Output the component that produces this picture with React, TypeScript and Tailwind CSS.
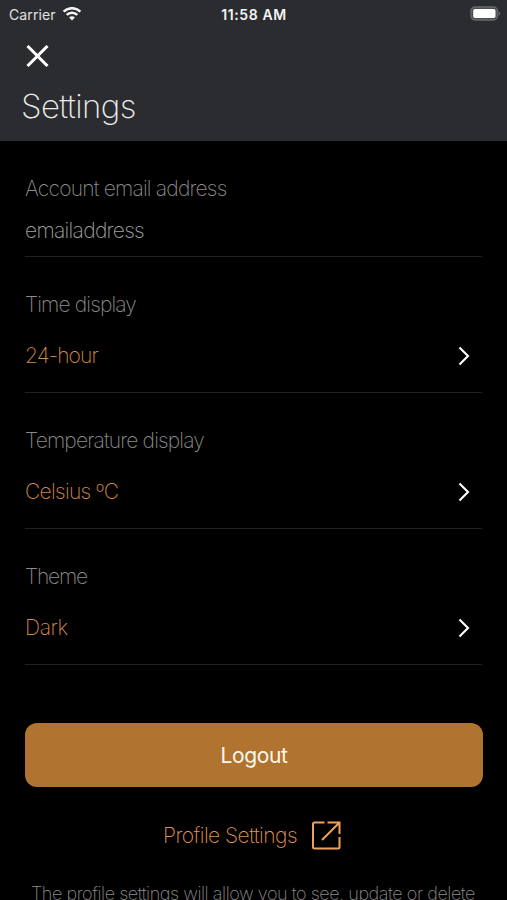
import React from "react";

function Wifi() {
  return (
    <svg width="20" height="15" viewBox="0 0 20 15" fill="none" stroke="#f4f4f4" strokeWidth="2.5">
      <path d="M1.6 4.6a12 12 0 0 1 16.8 0" />
      <path d="M4.7 7.8a7.6 7.6 0 0 1 10.6 0" />
      <path d="M10 13.6l-2.9-3a4 4 0 0 1 5.8 0z" fill="#f4f4f4" stroke="none" />
    </svg>
  );
}

function Battery() {
  return (
    <svg width="31" height="16" viewBox="0 0 31 16">
      <rect x="1" y="1" width="26.5" height="13" rx="4" fill="#4b4c4f" stroke="#68696c" strokeWidth="1.3" />
      <rect x="3.2" y="3" width="22.3" height="9" rx="1.8" fill="#fff" />
      <path d="M28.6 5.2c2 .8 2 3.8 0 4.6z" fill="#68696c" />
    </svg>
  );
}

function SettingRow({ label, value, labelClass, valueClass }: { label: string; value: string; labelClass: string; valueClass: string }) {
  return (
    <section className="h-[136px] border-b border-[#212121] pt-[34px]">
      <div className={`h-7 leading-7 whitespace-nowrap text-[#8c8c8c] ${labelClass}`}>{label}</div>
      <div className="mt-[23px] flex h-7 items-center justify-between pr-3">
        <span className={`leading-7 whitespace-nowrap text-[#d58a48] ${valueClass}`}>{value}</span>
        <svg width="12" height="20" viewBox="0 0 12 20" fill="none" stroke="#fff" strokeWidth="2.1">
          <path d="M1.5 1.5L10 10L1.5 18.5" />
        </svg>
      </div>
    </section>
  );
}

export default function App() {
  return (
    <main className="h-[900px] w-[507px] overflow-hidden bg-black font-['Inter',sans-serif] text-[21px] font-extralight">
      <header className="h-[141px] bg-[#2b2c2f]">
        <div className="grid h-7 grid-cols-3 items-center pr-1.5 pl-[9px] text-[14px]">
          <div className="flex items-center gap-[6px]">
            <span className="font-normal tracking-[0.1px] text-[#e2e2e2]">Carrier</span>
            <Wifi />
          </div>
          <span className="pr-[2px] text-center font-semibold tracking-[0.6px] whitespace-nowrap text-[#f4f4f4]">11:58 AM</span>
          <div className="flex justify-end"><Battery /></div>
        </div>
        <svg className="mt-[17px] ml-[26px]" width="23" height="22" viewBox="0 0 23 22" fill="none" stroke="#fff" strokeWidth="3">
          <path d="M1.5 1L21.5 21M21.5 1L1.5 21" />
        </svg>
        <h1 className="mt-[19px] ml-[21px] text-[33px] leading-10 font-extralight tracking-[-0.6px] text-[#ececec]">Settings</h1>
      </header>
      <div className="px-[25px] pt-px">
        <section className="h-[115px] border-b border-[#212121] pt-[33px]">
          <div className="h-7 leading-7 tracking-[-0.8px] whitespace-nowrap text-[#8c8c8c]">Account email address</div>
          <div className="mt-[14px] h-7 leading-7 tracking-[-0.7px] whitespace-nowrap text-[#a0a0a0]">emailaddress</div>
        </section>
        <SettingRow label="Time display" value="24-hour" labelClass="tracking-[-0.87px]" valueClass="tracking-[-0.9px]" />
        <SettingRow label="Temperature display" value="Celsius ºC" labelClass="tracking-[-0.84px]" valueClass="tracking-[-0.68px]" />
        <SettingRow label="Theme" value="Dark" labelClass="tracking-[-1.2px]" valueClass="tracking-[-0.4px]" />
        <button className="mt-[58px] block h-16 w-[458px] rounded-[12px] bg-[#b07430] pt-px text-[21px] font-normal tracking-[-0.4px] text-[#fff8ee]">Logout</button>
        <div className="mt-[33px] flex h-[30px] items-center pl-[138px] text-[#e3954f]">
          <span className="w-[149px] pt-px tracking-[-0.52px] whitespace-nowrap">Profile Settings</span>
          <svg width="29" height="29" viewBox="0 0 29 29" fill="none" stroke="#efa15c" strokeWidth="2">
            <path d="M12.5 1.5H2.5a1.5 1.5 0 0 0-1.5 1.5V26a1.5 1.5 0 0 0 1.5 1.5H26a1.5 1.5 0 0 0 1.5-1.5V16M15.5 1.5H27.5V13M27.5 1.5L10 19" />
          </svg>
        </div>
        <p className="mt-[32px] ml-[6px] text-[18px] leading-6 tracking-[-0.45px] whitespace-nowrap text-[#8c8c8c]">The profile settings will allow you to see, update or delete</p>
      </div>
    </main>
  );
}
